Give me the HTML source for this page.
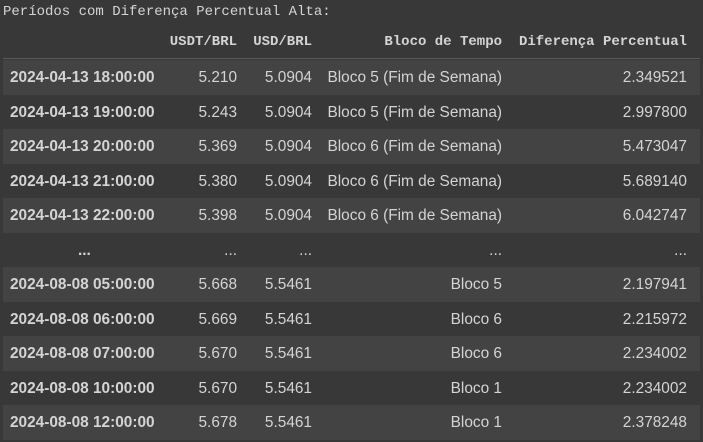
<!DOCTYPE html>
<html><head><style>
body{margin:0;background:#383838;width:703px;height:442px;overflow:hidden;color:#d4d4d4;}
.t{position:absolute;left:3px;top:4px;font:14px "Liberation Mono",monospace;color:#d4d4d4;white-space:pre;}
.h{position:absolute;top:28px;left:3px;width:697px;height:30px;border-bottom:1px solid #5a5a5a;font:bold 14px "Liberation Mono",monospace;}
.r{position:absolute;left:3px;width:697px;height:34.5px;font:15.4px "Liberation Sans",sans-serif;}
.r.o{background:#434343;}
.c{position:absolute;top:1px;line-height:34.5px;white-space:nowrap;text-align:right;}
.h .c{line-height:28px;top:0}
.i{left:7px;font-weight:bold;text-align:left;}
.a{right:463px}.b{right:388px}.d{right:198px}.e{right:13px}
</style></head><body>
<div class="t">Períodos com Diferença Percentual Alta:</div>
<div class="h"><span class="c a">USDT/BRL</span><span class="c b">USD/BRL</span><span class="c d">Bloco de Tempo</span><span class="c e">Diferença Percentual</span></div>
<div class="r o" style="top:60px"><span class="c i">2024-04-13 18:00:00</span><span class="c a">5.210</span><span class="c b">5.0904</span><span class="c d">Bloco 5 (Fim de Semana)</span><span class="c e">2.349521</span></div>
<div class="r" style="top:94.5px"><span class="c i">2024-04-13 19:00:00</span><span class="c a">5.243</span><span class="c b">5.0904</span><span class="c d">Bloco 5 (Fim de Semana)</span><span class="c e">2.997800</span></div>
<div class="r o" style="top:129px"><span class="c i">2024-04-13 20:00:00</span><span class="c a">5.369</span><span class="c b">5.0904</span><span class="c d">Bloco 6 (Fim de Semana)</span><span class="c e">5.473047</span></div>
<div class="r" style="top:163.5px"><span class="c i">2024-04-13 21:00:00</span><span class="c a">5.380</span><span class="c b">5.0904</span><span class="c d">Bloco 6 (Fim de Semana)</span><span class="c e">5.689140</span></div>
<div class="r o" style="top:198px"><span class="c i">2024-04-13 22:00:00</span><span class="c a">5.398</span><span class="c b">5.0904</span><span class="c d">Bloco 6 (Fim de Semana)</span><span class="c e">6.042747</span></div>
<div class="r" style="top:232.5px"><span class="c i" style="left:75px">...</span><span class="c a">...</span><span class="c b">...</span><span class="c d">...</span><span class="c e">...</span></div>
<div class="r o" style="top:267px"><span class="c i">2024-08-08 05:00:00</span><span class="c a">5.668</span><span class="c b">5.5461</span><span class="c d">Bloco 5</span><span class="c e">2.197941</span></div>
<div class="r" style="top:301.5px"><span class="c i">2024-08-08 06:00:00</span><span class="c a">5.669</span><span class="c b">5.5461</span><span class="c d">Bloco 6</span><span class="c e">2.215972</span></div>
<div class="r o" style="top:336px"><span class="c i">2024-08-08 07:00:00</span><span class="c a">5.670</span><span class="c b">5.5461</span><span class="c d">Bloco 6</span><span class="c e">2.234002</span></div>
<div class="r" style="top:370.5px"><span class="c i">2024-08-08 10:00:00</span><span class="c a">5.670</span><span class="c b">5.5461</span><span class="c d">Bloco 1</span><span class="c e">2.234002</span></div>
<div class="r o" style="top:405px"><span class="c i">2024-08-08 12:00:00</span><span class="c a">5.678</span><span class="c b">5.5461</span><span class="c d">Bloco 1</span><span class="c e">2.378248</span></div>
</body></html>
